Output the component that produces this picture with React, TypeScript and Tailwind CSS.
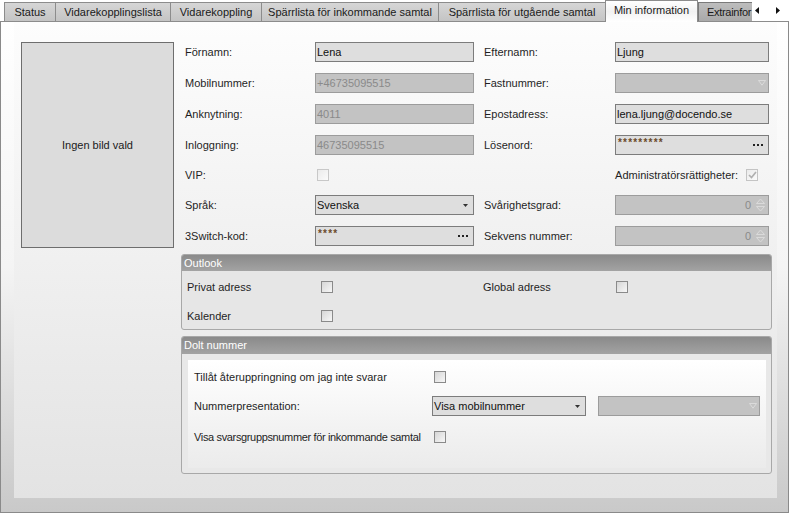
import React from "react";

type CBVariant = "normal" | "disabled" | "checkedDisabled";

const CheckBox = ({ variant }: { variant: CBVariant }) => {
  if (variant === "normal")
    return <div className="w-[12px] h-[12px] shrink-0 border border-[#8a8a8a] bg-linear-to-br from-[#d6d6d6] to-[#f7f7f7]" />;
  if (variant === "disabled")
    return <div className="w-[12px] h-[12px] shrink-0 border border-[#c8c8c8] bg-linear-to-br from-[#ebebeb] to-[#fbfbfb]" />;
  return (
    <div className="w-[12px] h-[12px] shrink-0 border border-[#c4c4c4] bg-linear-to-br from-[#ebebeb] to-[#fbfbfb] flex items-center justify-center">
      <svg width="9" height="8" viewBox="0 0 9 8">
        <path d="M1 4 L3.5 6.5 L8 1" stroke="#b0b0b0" strokeWidth="1.7" fill="none" />
      </svg>
    </div>
  );
};

const Dots = () => (
  <div className="flex gap-[2px] items-center">
    <span className="w-[2px] h-[2px] bg-[#222]" />
    <span className="w-[2px] h-[2px] bg-[#222]" />
    <span className="w-[2px] h-[2px] bg-[#222]" />
  </div>
);

const SolidArrow = () => (
  <svg width="5" height="3" viewBox="0 0 5 3">
    <path d="M0 0 L5 0 L2.5 3 Z" fill="#333" />
  </svg>
);

const OutlineArrow = () => (
  <svg width="8" height="6" viewBox="0 0 8 6">
    <path d="M0.5 0.5 L7.5 0.5 L4 5.2 Z" fill="none" stroke="#dadada" strokeWidth="1" />
  </svg>
);

const SpinArrows = () => (
  <svg width="9" height="16" viewBox="0 0 9 16">
    <path d="M0.5 6.5 L4.5 2 L8.5 6.5 Z" fill="none" stroke="#dadada" strokeWidth="1" />
    <path d="M0.5 9.5 L4.5 14 L8.5 9.5 Z" fill="none" stroke="#dadada" strokeWidth="1" />
  </svg>
);

const Enabled = ({ w, children }: { w: string; children: React.ReactNode }) => (
  <div className={"h-[20px] border border-[#7c7c7c] bg-[#dedede] text-[#111] flex items-center shrink-0 " + w}>{children}</div>
);

const Disabled = ({ w, children }: { w: string; children?: React.ReactNode }) => (
  <div className={"h-[20px] border border-[#9c9c9c] bg-[#c3c3c3] text-[#8a8a8a] flex items-center shrink-0 " + w}>{children}</div>
);

const Label1 = ({ children }: { children: React.ReactNode }) => (
  <div className="w-[134px] pl-[4px] shrink-0 text-[#1f1f1f]">{children}</div>
);
const Label2 = ({ children }: { children: React.ReactNode }) => (
  <div className="w-[141px] pl-[10px] shrink-0 text-[#1f1f1f]">{children}</div>
);

const Stars = ({ n }: { n: string }) => (
  <span className="pl-[2px] self-start mt-[2px] text-[10px] leading-[10px] tracking-[1.2px] text-[#6b4a2a] font-bold">{n}</span>
);

const tabs: { label: string; cls: string }[] = [
  { label: "Status", cls: "w-[51px]" },
  { label: "Vidarekopplingslista", cls: "w-[115px]" },
  { label: "Vidarekoppling", cls: "w-[91px]" },
  { label: "Spärrlista för inkommande samtal", cls: "w-[177px]" },
  { label: "Spärrlista för utgående samtal", cls: "w-[167px]" },
];

export default function App() {
  return (
    <div className="w-[791px] h-[514px] bg-white overflow-hidden font-['Liberation_Sans',Arial,sans-serif] text-[11px] leading-[13px] text-[#1f1f1f]">
      {/* Tab strip */}
      <div className="w-[789px] h-[22px] flex items-end border-b border-[#8c8c8c] pl-[4px]">
        {tabs.map((t) => (
          <div
            key={t.label}
            className={"h-[19px] shrink-0 border-t border-l border-[#8c8c8c] bg-linear-to-b from-[#d6d6d6] to-[#c4c4c4] flex items-center justify-center whitespace-nowrap text-[#1a1a1a] " + t.cls}
          >
            {t.label}
          </div>
        ))}
        <div className="w-[93px] h-[22px] -mb-px relative z-10 shrink-0 border-t border-l border-r border-[#8c8c8c] bg-linear-to-b from-white via-[#f2f2f2] to-white flex items-center justify-center whitespace-nowrap text-[#1a1a1a] pb-[2px]">
          Min information
        </div>
        <div className="w-[54px] h-[19px] shrink-0 overflow-hidden border-t border-l border-[#7a7a7a] bg-linear-to-b from-[#bdbdbd] to-[#a9a9a9] flex items-center pl-[8px] whitespace-nowrap text-[#1a1a1a] tracking-[-0.3px]">
          Extrainfor
        </div>
        <div className="w-[37px] h-[21px] shrink-0 bg-white flex items-center pl-[3px] gap-[17px]">
          <svg width="4" height="7" viewBox="0 0 4 7">
            <path d="M4 0 L0 3.5 L4 7 Z" fill="#111" />
          </svg>
          <svg width="4" height="7" viewBox="0 0 4 7">
            <path d="M0 0 L4 3.5 L0 7 Z" fill="#111" />
          </svg>
        </div>
      </div>

      {/* Panel */}
      <div className="w-[789px] h-[491px] border-l border-r border-b border-[#8a8a8a] bg-linear-to-b from-white via-[#f4f4f4] to-[#c9c9c9]">
        <div className="ml-[13px] w-[763px] h-[476px] bg-linear-to-b from-[#fdfdfd] to-[#e3e3e3] flex pl-[7px] pt-[20px] gap-[7px]">
          {/* Picture */}
          <div className="w-[153px] h-[206px] shrink-0 border border-[#6e6e6e] bg-[#dcdcdc] flex items-center justify-center text-[#1a1a1a]">
            Ingen bild vald
          </div>

          {/* Right column */}
          <div className="w-[591px] flex flex-col">
            <div className="flex flex-col gap-[11px]">
              <div className="h-[20px] flex items-center">
                <Label1>Förnamn:</Label1>
                <Enabled w="w-[159px]"><span className="pl-[1px]">Lena</span></Enabled>
                <Label2>Efternamn:</Label2>
                <Enabled w="w-[154px]"><span className="pl-[1px]">Ljung</span></Enabled>
              </div>
              <div className="h-[20px] flex items-center">
                <Label1>Mobilnummer:</Label1>
                <Disabled w="w-[159px]"><span className="pl-[1px]">+46735095515</span></Disabled>
                <Label2>Fastnummer:</Label2>
                <Disabled w="w-[154px] justify-end pr-[2px]"><OutlineArrow /></Disabled>
              </div>
              <div className="h-[20px] flex items-center">
                <Label1>Anknytning:</Label1>
                <Disabled w="w-[159px]"><span className="pl-[1px]">4011</span></Disabled>
                <Label2>Epostadress:</Label2>
                <Enabled w="w-[154px]"><span className="pl-[1px]">lena.ljung@docendo.se</span></Enabled>
              </div>
              <div className="h-[20px] flex items-center">
                <Label1>Inloggning:</Label1>
                <Disabled w="w-[159px]"><span className="pl-[1px]">46735095515</span></Disabled>
                <Label2>Lösenord:</Label2>
                <Enabled w="w-[154px] justify-between pr-[5px]"><Stars n="*********" /><Dots /></Enabled>
              </div>
              <div className="h-[18px] flex items-center">
                <Label1>VIP:</Label1>
                <div className="w-[159px] pl-[2px] shrink-0">
                  <CheckBox variant="disabled" />
                </div>
                <div className="w-[295px] flex items-center justify-end pr-[11px] gap-[8px]">
                  <span>Administratörsrättigheter:</span>
                  <CheckBox variant="checkedDisabled" />
                </div>
              </div>
              <div className="h-[20px] flex items-center">
                <Label1>Språk:</Label1>
                <Enabled w="w-[159px] justify-between pr-[5px]"><span className="pl-[1px]">Svenska</span><SolidArrow /></Enabled>
                <Label2>Svårighetsgrad:</Label2>
                <Disabled w="w-[154px] justify-end pr-[3px] gap-[5px]"><span>0</span><SpinArrows /></Disabled>
              </div>
              <div className="h-[20px] flex items-center">
                <Label1>3Switch-kod:</Label1>
                <Enabled w="w-[159px] justify-between pr-[5px]"><Stars n="****" /><Dots /></Enabled>
                <Label2>Sekvens nummer:</Label2>
                <Disabled w="w-[154px] justify-end pr-[3px] gap-[5px]"><span>0</span><SpinArrows /></Disabled>
              </div>
            </div>

            {/* Outlook group */}
            <div className="mt-[8px] w-[591px] border border-[#a8a8a8] rounded-[3px] overflow-hidden bg-[#e6e6e6]">
              <div className="h-[16px] bg-linear-to-b from-[#8a8a8a] to-[#a3a3a3] text-white pl-[2px] flex items-center">
                Outlook
              </div>
              <div className="h-[58px] pt-[7px] pl-[5px] flex flex-col gap-[11px]">
                <div className="h-[18px] flex items-center">
                  <div className="w-[134px] shrink-0">Privat adress</div>
                  <CheckBox variant="normal" />
                  <div className="w-[150px] shrink-0" />
                  <div className="w-[133px] shrink-0">Global adress</div>
                  <CheckBox variant="normal" />
                </div>
                <div className="h-[18px] flex items-center">
                  <div className="w-[134px] shrink-0">Kalender</div>
                  <CheckBox variant="normal" />
                </div>
              </div>
            </div>

            {/* Dolt nummer group */}
            <div className="mt-[6px] w-[591px] border border-[#a8a8a8] rounded-[3px] overflow-hidden bg-[#e8e8e8]">
              <div className="h-[17px] bg-linear-to-b from-[#8a8a8a] to-[#a3a3a3] text-white pl-[2px] flex items-center">
                Dolt nummer
              </div>
              <div className="pt-[6px] pl-[6px] pr-[5px] pb-[5px]">
                <div className="h-[108px] bg-linear-to-b from-white to-[#ebebeb] pl-[6px] pt-[8px] flex flex-col">
                  <div className="h-[18px] flex items-center">
                    <div className="w-[240px] shrink-0">Tillåt återuppringning om jag inte svarar</div>
                    <CheckBox variant="normal" />
                  </div>
                  <div className="h-[20px] mt-[10px] flex items-center">
                    <div className="w-[238px] shrink-0">Nummerpresentation:</div>
                    <Enabled w="w-[154px] justify-between pr-[5px]"><span className="pl-[1px]">Visa mobilnummer</span><SolidArrow /></Enabled>
                    <div className="w-[12px] shrink-0" />
                    <Disabled w="w-[162px] justify-end pr-[2px]"><OutlineArrow /></Disabled>
                  </div>
                  <div className="h-[18px] mt-[12px] flex items-center">
                    <div className="w-[240px] shrink-0 whitespace-nowrap tracking-[-0.35px]">Visa svarsgruppsnummer för inkommande samtal</div>
                    <CheckBox variant="normal" />
                  </div>
                </div>
              </div>
            </div>
          </div>
        </div>
      </div>
    </div>
  );
}
